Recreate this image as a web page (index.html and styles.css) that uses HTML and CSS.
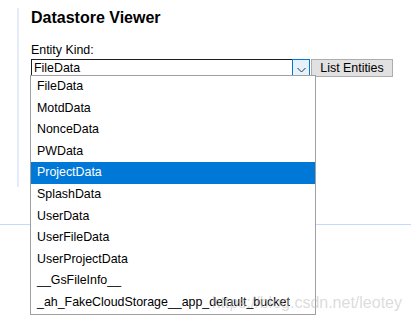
FILE: index.html
```html
<!DOCTYPE html>
<html lang="en">
<head>
    <meta charset="UTF-8">
    <meta name="viewport" content="width=device-width, initial-scale=1.0">
    <title>Datastore Viewer</title>
    <link rel="stylesheet" href="styles.css">
</head>
<body>
    <div class="main">
        <h1>Datastore Viewer</h1>
        <form id="kind-form">
            <label class="kind-label" for="kind">Entity Kind:</label>
            <div class="kind-row">
                <div class="picker">
                    <div class="select" id="kind">
                        <span class="select-value">FileData</span>
                        <span class="select-arrow">
                            <svg width="9" height="6" viewBox="0 0 9 6"><path d="M0.5 1 L4.5 5 L8.5 1" fill="none" stroke="#333" stroke-width="1"/></svg>
                        </span>
                    </div>
                    <ul class="options">
                        <li>FileData</li>
                        <li>MotdData</li>
                        <li>NonceData</li>
                        <li>PWData</li>
                        <li class="selected">ProjectData</li>
                        <li>SplashData</li>
                        <li>UserData</li>
                        <li>UserFileData</li>
                        <li>UserProjectData</li>
                        <li>__GsFileInfo__</li>
                        <li>_ah_FakeCloudStorage__app_default_bucket</li>
                    </ul>
                </div>
                <button type="submit">List Entities</button>
            </div>
        </form>
    </div>
    <div class="rule"></div>
    <div class="watermark">https://blog.csdn.net/leotey</div>
</body>
</html>
```

FILE: styles.css
```css
body {
    margin: 0;
    padding: 0;
    font-family: 'Liberation Sans', Arial, sans-serif;
    color: #000;
    background: #fff;
    height: 326px;
    position: relative;
    overflow: hidden;
}

.main {
    margin: 8px 0 0 17px;
    padding-left: 12px;
    border-left: 2px solid #e5ecf9;
    height: 179px;
}

h1 {
    margin: 0;
    font-size: 16px;
    line-height: 19px;
    font-weight: bold;
}

.kind-label {
    display: block;
    margin-top: 16px;
    font-size: 12.4px;
    line-height: 15px;
}

.kind-row {
    display: flex;
    margin-top: 1px;
}

.picker {
    position: relative;
}

.select {
    box-sizing: border-box;
    width: 279px;
    height: 18px;
    border: 1px solid #1e1e1e;
    border-bottom-color: #7a7a7a;
    display: flex;
    align-items: center;
    justify-content: space-between;
    font-size: 12.4px;
}

.select-value {
    padding-left: 2px;
}

.select-arrow {
    box-sizing: border-box;
    width: 18px;
    height: 18px;
    margin: -1px -1px -1px 0;
    border: 1px solid #0078d7;
    background: #e5f1fb;
    display: flex;
    align-items: center;
    justify-content: center;
    padding-top: 3px;
}

.options {
    position: absolute;
    top: 16px;
    left: -1px;
    width: 286px;
    box-sizing: border-box;
    margin: 0;
    padding: 0;
    list-style: none;
    background: #fff;
    border: 1px solid #a0a0a0;
    font-size: 12.4px;
}

.options li {
    height: 21.6px;
    line-height: 21.6px;
    padding-left: 6px;
    white-space: nowrap;
}

.options li.selected {
    background: #0078d7;
    color: #fff;
}

button {
    box-sizing: border-box;
    margin-left: 1px;
    width: 82px;
    height: 18px;
    padding: 0;
    background: #e1e1e1;
    border: 1px solid #adadad;
    font-family: 'Liberation Sans', Arial, sans-serif;
    font-size: 12.4px;
    line-height: 15px;
    color: #000;
}

.rule {
    margin-top: 37px;
    border-top: 1px solid #c3d9ff;
}

.watermark {
    position: absolute;
    right: 9px;
    top: 294px;
    font-size: 16px;
    color: rgba(190, 190, 190, 0.55);
    white-space: nowrap;
}
```
